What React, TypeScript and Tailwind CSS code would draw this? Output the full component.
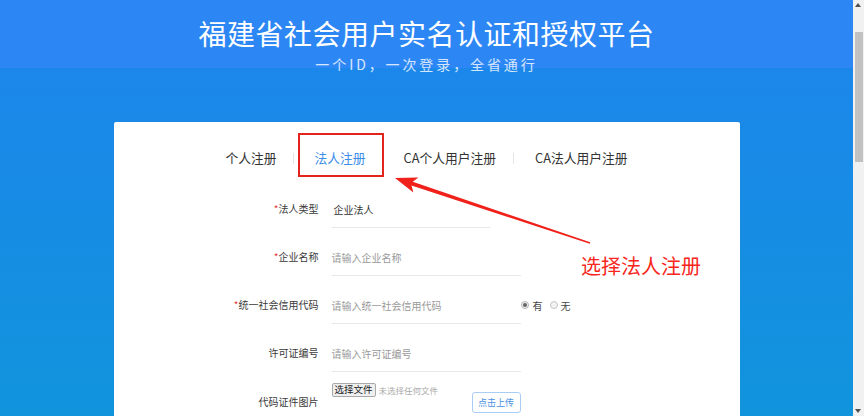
import React from "react";

const font = "font-['Noto_Sans_CJK_SC',sans-serif]";

const Row = ({
  label,
  required,
  children,
}: {
  label: string;
  required?: boolean;
  children: React.ReactNode;
}) => (
  <div className="flex h-[37px] items-start mb-[11px]">
    <div className="w-[205px] h-[36px] flex items-center justify-end text-[10px] leading-[14px] text-[#3a3a3a]">
      {required && <span className="text-[#e4393c]">*</span>}
      {label}
    </div>
    {children}
  </div>
);

const App = () => {
  return (
    <div className={`flex h-[416px] w-[864px] overflow-hidden ${font}`}>
      {/* page */}
      <div className="relative h-full w-[853px] bg-[linear-gradient(to_bottom,#2c87f5_0px,#2c87f5_68px,#1b87ea_68px,#1194dc_100%)]">
        <div className="pt-[16px] text-center">
          <h1 className="text-[28px] leading-[34px] tracking-[0.5px] text-white">
            福建省社会用户实名认证和授权平台
          </h1>
          <p className="mt-[5px] text-[14px] leading-[18px] tracking-[2.9px] text-white/80">
            一个ID，一次登录，全省通行
          </p>
        </div>

        {/* card */}
        <div className="mx-auto mt-[49px] w-[626px] h-[400px] rounded-[2px] bg-white pt-[26px]">
          {/* tabs */}
          <div className="flex h-[20px] items-center justify-center text-[12.75px] leading-[20px] text-[#333]">
            <span>个人注册</span>
            <span className="ml-[16px] mr-[21px] h-[11px] w-px bg-[#e5e5e5]" />
            <span className="relative text-[#3d8ee8]">
              法人注册
              <span className="absolute left-[-17px] right-[-18px] top-[-15px] bottom-[-9px] border-2 border-[#e3241d]" />
            </span>
            <span className="ml-[38px]">CA个人用户注册</span>
            <span className="ml-[17px] mr-[21px] h-[11px] w-px bg-[#e5e5e5]" />
            <span>CA法人用户注册</span>
          </div>

          {/* form */}
          <div className="mt-[23px]">
            <Row label="法人类型" required>
              <div className="ml-[13px] h-[37px] w-[158px] border-b border-[#e8e8e8] flex items-center pl-[2px] text-[10px] text-[#333]">
                企业法人
              </div>
            </Row>
            <Row label="企业名称" required>
              <div className="ml-[13px] h-[37px] w-[189px] border-b border-[#e8e8e8] flex items-center text-[10px] text-[#999]">
                请输入企业名称
              </div>
            </Row>
            <Row label="统一社会信用代码" required>
              <div className="ml-[13px] h-[37px] w-[189px] border-b border-[#e8e8e8] flex items-center text-[10px] text-[#999]">
                请输入统一社会信用代码
              </div>
              <div className="h-[36px] flex items-center text-[10px] text-[#444]">
                <span className="flex h-[8px] w-[8px] items-center justify-center rounded-full border border-[#b5b5b5] bg-[#f2f2f2]">
                  <span className="h-[4px] w-[4px] rounded-full bg-[#666]" />
                </span>
                <span className="ml-[4px]">有</span>
                <span className="ml-[7px] h-[8px] w-[8px] rounded-full border border-[#c5c5c5] bg-[#f2f2f2]" />
                <span className="ml-[3px]">无</span>
              </div>
            </Row>
            <Row label="许可证编号">
              <div className="ml-[13px] h-[37px] w-[189px] border-b border-[#e8e8e8] flex items-center text-[10px] text-[#999]">
                请输入许可证编号
              </div>
            </Row>
            <div className="flex h-[38px]">
              <div className="w-[205px] self-center text-right text-[10px] leading-[14px] text-[#3a3a3a]">
                代码证件图片
              </div>
              <div className="ml-[13px] flex w-[189px] flex-col">
                <div className="flex items-center">
                  <span className="flex h-[14px] w-[44px] items-center justify-center rounded-[2px] border border-[#a9a9a9] bg-[#efefef] text-[9.5px] leading-none text-[#222]">
                    选择文件
                  </span>
                  <span className="ml-[3px] text-[8.5px] leading-none text-[#aaa]">
                    未选择任何文件
                  </span>
                </div>
                <div className="-mt-[5px] flex h-[21px] w-[49px] items-center justify-center self-end rounded-[3px] border border-[#a9cdf5] text-[9px] text-[#4a90e2]">
                  点击上传
                </div>
              </div>
            </div>
          </div>
        </div>

        {/* annotation */}
        <svg
          className="pointer-events-none absolute left-0 top-0"
          width="853"
          height="416"
          viewBox="0 0 853 416"
        >
          <polygon
            points="395,178 418.4,177.4 412.7,181.8 590.2,242.3 589.8,243.7 411.5,185.6 413.4,192.6"
            fill="#f0201a"
          />
        </svg>
        <div className="absolute left-[581px] top-[254px] text-[20px] leading-[24px] text-[#f7271d]">
          选择法人注册
        </div>
      </div>

      {/* scrollbar */}
      <div className="relative h-full w-[11px] bg-[#f1f1f1]">
        <div className="absolute left-[2px] top-[3px] h-0 w-0 border-x-[3px] border-b-[4px] border-x-transparent border-b-[#505050]" />
        <div className="absolute left-[2px] top-[32px] h-[130px] w-[8px] bg-[#c1c1c1]" />
        <div className="absolute bottom-[3px] left-[2px] h-0 w-0 border-x-[3px] border-t-[4px] border-x-transparent border-t-[#505050]" />
      </div>
    </div>
  );
};

export default App;
